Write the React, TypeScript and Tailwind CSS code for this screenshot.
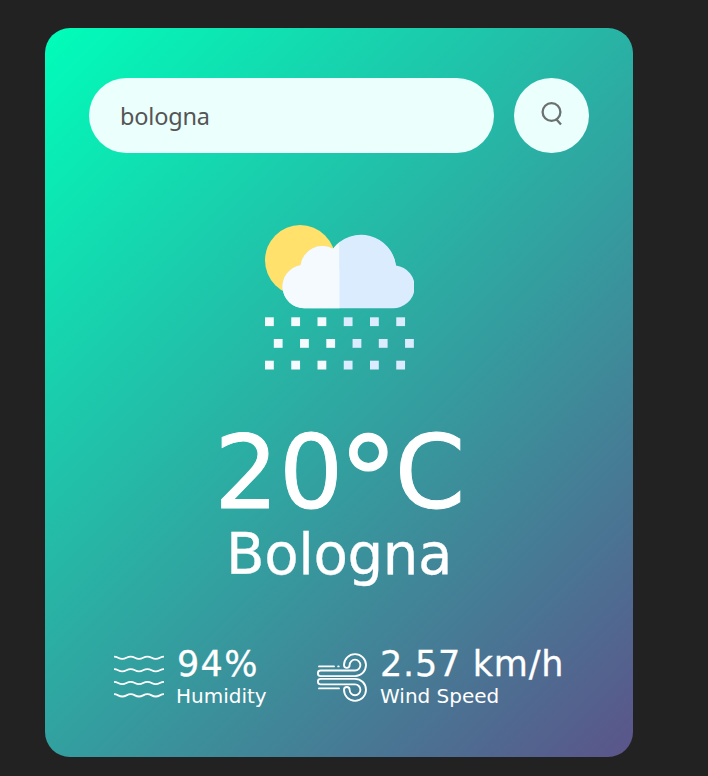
const text = "font-['DejaVu_Sans',Verdana,sans-serif]";

function Cloud() {
  const xs = [0, 1, 2, 3, 4, 5];
  const rows = [{ y: 317.3, x: 265 }, { y: 339, x: 273.8 }, { y: 360.7, x: 265 }];
  return (
    <svg viewBox="264 223 150 150" className="block h-[150px] w-[150px]">
      <clipPath id="left"><rect x="264" y="223" width="75.5" height="90" /></clipPath>
      <circle cx="300.2" cy="260.3" r="35.2" fill="#ffe16b" />
      {["#daecfe", "#f4fafe"].map((fill, i) => (
        <path key={fill} fill={fill} clipPath={i ? "url(#left)" : undefined}
          d="M304 308.2 A21.6 21.6 0 0 1 300.5 265.3 A22 22 0 0 1 333 248.8 A35.2 35.2 0 0 1 396 265.4 A21.5 21.5 0 0 1 392.3 308.2 Z" />
      ))}
      <path d="M339.5 243 A35 35 0 0 1 395.9 265.5 L339.5 270 Z" fill="#daecfe" />
      {rows.map((r) => xs.map((i) => (
        <rect key={`${r.y}-${i}`} x={r.x + i * 26.25} y={r.y} width="8.8" height="8.8" fill={i < 3 ? "#f4fafe" : "#daecfe"} />
      )))}
    </svg>
  );
}

function Waves() {
  return (
    <svg viewBox="114 653 50 50" className="block h-[50px] w-[50px]" fill="none" stroke="#fff" strokeWidth="1.8">
      {[656.6, 669.1, 681.8, 694.2].map((y) => (
        <path key={y} d={`M114 ${y} c4 0 4.3 2.3 8.3 2.3 s4.3 -2.3 8.4 -2.3 s4.3 2.3 8.3 2.3 s4.3 -2.3 8.4 -2.3 s4.3 2.3 8.3 2.3 s4.3 -2.3 8.3 -2.3`} />
      ))}
    </svg>
  );
}

function Wind() {
  return (
    <svg viewBox="317 653 50 50" className="block h-[50px] w-[50px]" fill="none" stroke="#fff" strokeWidth="1.85" strokeLinecap="round">
      <path d="M319 666.4H334M338.2 666.4h.5M319 688.4H339" />
      <path d="M320.7 676.1a2.8 2.8 0 0 1 0-5.6H355a5.4 5.4 0 1 0-5.4-5.4a2.8 2.8 0 0 1-5.6 0a11 11 0 1 1 11 11Z" />
      <path d="M320.7 678.8a2.8 2.8 0 0 0 0 5.6H355a5.4 5.4 0 1 1-5.4 5.4a2.8 2.8 0 0 0-5.6 0a11 11 0 1 0 11-11Z" />
    </svg>
  );
}

export default function App() {
  return (
    <div className={`h-[776px] w-[708px] overflow-hidden bg-[#222] pt-7 pl-[45px] text-white ${text}`}>
      <main className="flex h-[729px] w-[588px] flex-col items-center rounded-[25px] bg-[linear-gradient(135deg,#00feba,#5b548a)] px-11 pt-[50px]">
        <div className="flex w-full justify-between">
          <input defaultValue="bologna" spellCheck={false} className="h-[75px] w-[405px] rounded-full bg-[#ebfffc] px-[31px] font-['Noto_Sans'] text-[23.5px] tracking-[-0.2px] text-[#555] outline-none" />
          <button className="flex size-[75px] items-center justify-center rounded-full bg-[#ebfffc]">
            <svg viewBox="539 99 25 29" className="mb-[4px] block h-[29px] w-[25px]" fill="none" stroke="#6b7170" strokeWidth="2.3">
              <circle cx="551.5" cy="112" r="8.9" /><path d="M556.5 119.5l4.5 5" />
            </svg>
          </button>
        </div>
        <div className="mt-[70px]"><Cloud /></div>
        <h1 className="mt-[42px] ml-[2px] text-[101px] leading-[116px] tracking-[0.5px] whitespace-nowrap [-webkit-text-stroke:0.9px_white]">20<span className="relative top-[8px] -left-px inline-block origin-center scale-[1.2]">°</span>C</h1>
        <h2 className="text-[56.25px] leading-[48px] tracking-[-0.4px] whitespace-nowrap [-webkit-text-stroke:0.3px_white]">Bologna</h2>
        <div className="mt-[66px] flex w-full pl-[25px]">
          <div className="flex w-[203px] gap-[13px]">
            <div className="mt-2"><Waves /></div>
            <div><p className="text-[35px] leading-[38px] tracking-[1.3px] whitespace-nowrap [-webkit-text-stroke:0.3px_white]">94%</p><p className="-ml-px text-[20px] leading-[26px]">Humidity</p></div>
          </div>
          <div className="flex gap-[13px]">
            <div className="mt-2"><Wind /></div>
            <div><p className="text-[35px] leading-[38px] tracking-[0.75px] whitespace-nowrap [-webkit-text-stroke:0.3px_white]">2.57 km/h</p><p className="text-[20px] leading-[26px] whitespace-nowrap">Wind Speed</p></div>
          </div>
        </div>
      </main>
    </div>
  );
}
